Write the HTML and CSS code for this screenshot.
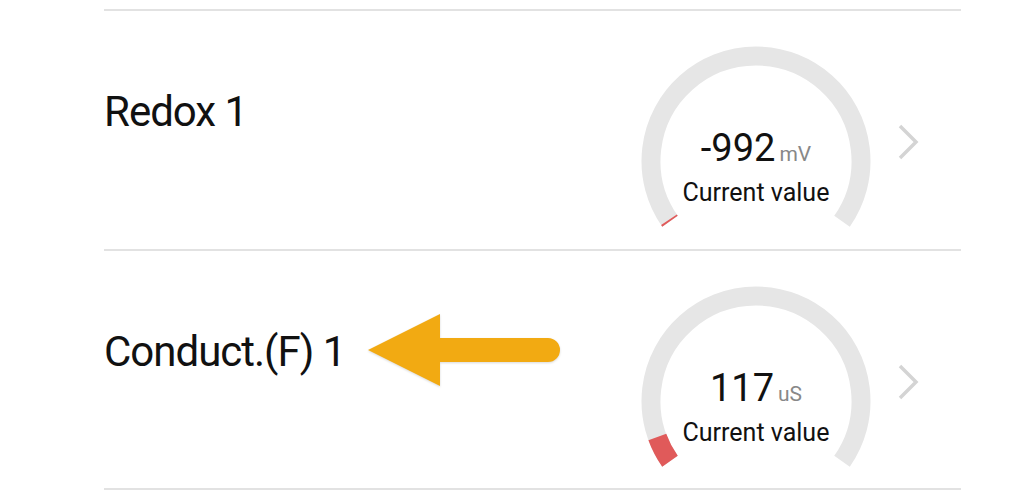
FILE: index.html
```html
<!DOCTYPE html>
<html lang="en">
<head>
    <meta charset="UTF-8">
    <meta name="viewport" content="width=device-width, initial-scale=1.0">
    <title>Sensors</title>
    <link rel="stylesheet" href="styles.css">
</head>
<body>
    <div class="list">
        <!-- Redox -->
        <div class="row">
            <div class="title">Redox 1</div>
            <div class="gauge">
                <svg class="dial" width="240" height="200" viewBox="0 0 240 200">
                    <path class="track" d="M 33.99 180.23 A 105 105 0 1 1 206.01 180.23"/>
                    <path class="level" d="M 33.99 180.23 A 105 105 0 0 1 32.95 178.72"/>
                </svg>
                <div class="readout">
                    <div class="value">-992<span class="unit">mV</span></div>
                    <div class="caption">Current value</div>
                </div>
            </div>
            <div class="more">
                <svg width="22" height="36" viewBox="0 0 22 36"><polyline points="3,2 19,18 3,34"/></svg>
            </div>
        </div>

        <!-- Conductivity -->
        <div class="row">
            <div class="title">Conduct.(F) 1</div>
            <div class="gauge">
                <svg class="dial" width="240" height="200" viewBox="0 0 240 200">
                    <path class="track" d="M 33.99 180.23 A 105 105 0 1 1 206.01 180.23"/>
                    <path class="level" d="M 33.99 180.23 A 105 105 0 0 1 21.33 155.91"/>
                </svg>
                <div class="readout">
                    <div class="value">117<span class="unit">uS</span></div>
                    <div class="caption">Current value</div>
                </div>
            </div>
            <div class="more">
                <svg width="22" height="36" viewBox="0 0 22 36"><polyline points="3,2 19,18 3,34"/></svg>
            </div>
            <!-- annotation arrow -->
            <svg class="pointer" width="198" height="78" viewBox="0 0 198 78">
                <path d="M2 38 L74 2 L74 26 L182 26 A12 12 0 0 1 182 50 L74 50 L74 74 Z"/>
            </svg>
        </div>
    </div>
</body>
</html>
```

FILE: styles.css
```css
* {
    box-sizing: border-box;
}
body {
    margin: 0;
    background: #fff;
    font-family: Roboto, "Liberation Sans", sans-serif;
    color: #111;
}
.list {
    margin-left: 104px;
    width: 857px;
    padding-top: 9px;
}
.row {
    position: relative;
    display: flex;
    height: 240px;
    border-top: 2px solid #e2e2e2;
}
.row:last-child {
    border-bottom: 2px solid #e2e2e2;
    height: 241px;
}
.title {
    flex: 1;
    padding-top: 80px;
    font-size: 42px;
    line-height: 42px;
    letter-spacing: -1px;
}
.gauge {
    display: grid;
    width: 240px;
    height: 200px;
    margin-top: 30px;
}
.dial, .readout {
    grid-area: 1 / 1;
}
.track {
    fill: none;
    stroke: #e6e6e6;
    stroke-width: 19;
}
.level {
    fill: none;
    stroke: #e05a5a;
    stroke-width: 19;
}
.readout {
    text-align: center;
    padding-top: 87px;
}
.value {
    font-size: 38px;
    line-height: 40px;
}
.unit {
    font-size: 21px;
    color: #888;
    margin-left: 4px;
}
.caption {
    font-size: 25px;
    line-height: 30px;
    margin-top: 4px;
}
.more {
    width: 85px;
    padding-left: 21px;
    padding-top: 113px;
}
.more polyline {
    fill: none;
    stroke: #d4d4d4;
    stroke-width: 3.5;
}
.pointer {
    position: absolute;
    left: 262px;
    top: 61px;
    filter: drop-shadow(0 1px 1px rgba(0, 0, 0, 0.15));
}
.pointer path {
    fill: #f2aa12;
}
```
